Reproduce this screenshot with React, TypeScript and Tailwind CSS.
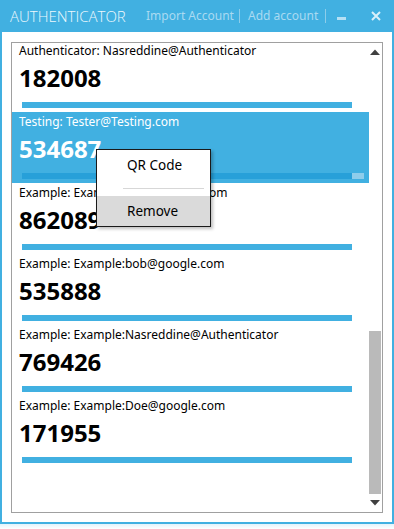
import React from "react";

type Item = { label: string; code: string; selected?: boolean };

const items: Item[] = [
  { label: "Authenticator: Nasreddine@Authenticator", code: "182008" },
  { label: "Testing: Tester@Testing.com", code: "534687", selected: true },
  { label: "Example: Example:john@google.com", code: "862089" },
  { label: "Example: Example:bob@google.com", code: "535888" },
  { label: "Example: Example:Nasreddine@Authenticator", code: "769426" },
  { label: "Example: Example:Doe@google.com", code: "171955" },
];

const FONT = { fontFamily: '"Noto Sans", "Open Sans", "Liberation Sans", sans-serif' };

function Row({ item }: { item: Item }) {
  const sel = !!item.selected;
  return (
    <div
      className={`h-[71px] pt-[2px] pl-[7px] pr-[5px] flex flex-col ${
        sel ? "bg-[#41b0e1] text-white" : "bg-white text-black"
      }`}
    >
      <div className="h-[16px] leading-[16px] text-[12px] whitespace-nowrap">{item.label}</div>
      <div
        className="mt-[3px] leading-[32px] text-[24px] font-bold whitespace-nowrap"
        style={{ fontFamily: '"Open Sans", "Noto Sans", sans-serif' }}
      >
        {item.code}
      </div>
      <div className={`mt-[8px] ml-[3px] h-[6px] flex ${sel ? "bg-[#8fcdeb]" : "bg-white"}`}>
        <div className={`h-full w-[330px] ${sel ? "bg-[#27a0d9]" : "bg-[#41b0e1]"}`} />
      </div>
    </div>
  );
}

export default function App() {
  return (
    <div className="relative w-[394px] h-[529px] bg-white overflow-hidden" style={FONT}>
      <div className="h-[524px] flex flex-col border-x-2 border-b-2 border-[#41b0e1]">
        {/* Title bar */}
        <div className="h-[32px] shrink-0 bg-[#41b0e1] flex items-center pl-[8px] whitespace-nowrap">
          <div
            className="shrink-0 w-[117px] text-[15px] font-light text-[#eef8fd]"
            style={{ fontFamily: '"Open Sans", "Noto Sans", sans-serif' }}
          >
            AUTHENTICATOR
          </div>
          <div className="shrink-0 ml-[19px] w-[86px] text-[12px] text-[#a9daf1]">Import Account</div>
          <div className="shrink-0 ml-[7px] w-px h-[14px] bg-[#8dcdea]" />
          <div className="shrink-0 ml-[8px] w-[69px] text-[12px] text-[#a9daf1]">Add account</div>
          <div className="shrink-0 ml-[8px] w-px h-[14px] bg-[#8dcdea]" />
          <div className="shrink-0 ml-[11px] mt-[4px] w-[9px] h-[3px] bg-[#b5e0f4]" />
          <div className="shrink-0 ml-[25px] w-[10px] h-[10px]">
            <svg width="10" height="10" viewBox="0 0 10 10">
              <path d="M1 1 L9 9 M9 1 L1 9" stroke="#d8effa" strokeWidth="2" />
            </svg>
          </div>
        </div>
        {/* Content */}
        <div className="flex-1 pt-[10px] px-[9px] pb-[9px] bg-white min-h-0">
          <div className="h-full border border-[#a0a0a0] flex">
            <div className="flex-1 overflow-hidden">
              <div className="-mt-[2px]">
                {items.map((it) => (
                  <Row key={it.code} item={it} />
                ))}
              </div>
            </div>
            {/* Scrollbar */}
            <div className="w-[13px] flex flex-col">
              <div className="h-[17px] flex items-center justify-center pr-[1px]">
                <svg width="10" height="6" viewBox="0 0 10 6">
                  <path d="M0 6 L5 0.5 L10 6 Z" fill="#404040" />
                </svg>
              </div>
              <div className="flex-1" />
              <div className="h-[163px] w-[12px] bg-[#bababa]" />
              <div className="h-[18px] flex items-center justify-center pr-[1px]">
                <svg width="10" height="6" viewBox="0 0 10 6">
                  <path d="M0 0 L10 0 L5 5.5 Z" fill="#404040" />
                </svg>
              </div>
            </div>
          </div>
        </div>
      </div>
      <div className="h-[5px] bg-gradient-to-b from-[#e4f3fb] to-white" />

      {/* Context menu */}
      <div className="absolute left-[96px] top-[149px] w-[115px] border border-[#1a1a1a] bg-white shadow-[2px_2px_3px_rgba(0,0,0,0.25)] text-[13.5px] text-black">
        <div className="h-[31px] flex items-center pl-[30px]">QR Code</div>
        <div className="h-[15px] flex items-center pl-[26px]">
          <div className="w-[81px] h-px bg-[#d7d7d7]" />
        </div>
        <div className="h-[30px] flex items-center pl-[30px] bg-[#dadada]">Remove</div>
      </div>
    </div>
  );
}
